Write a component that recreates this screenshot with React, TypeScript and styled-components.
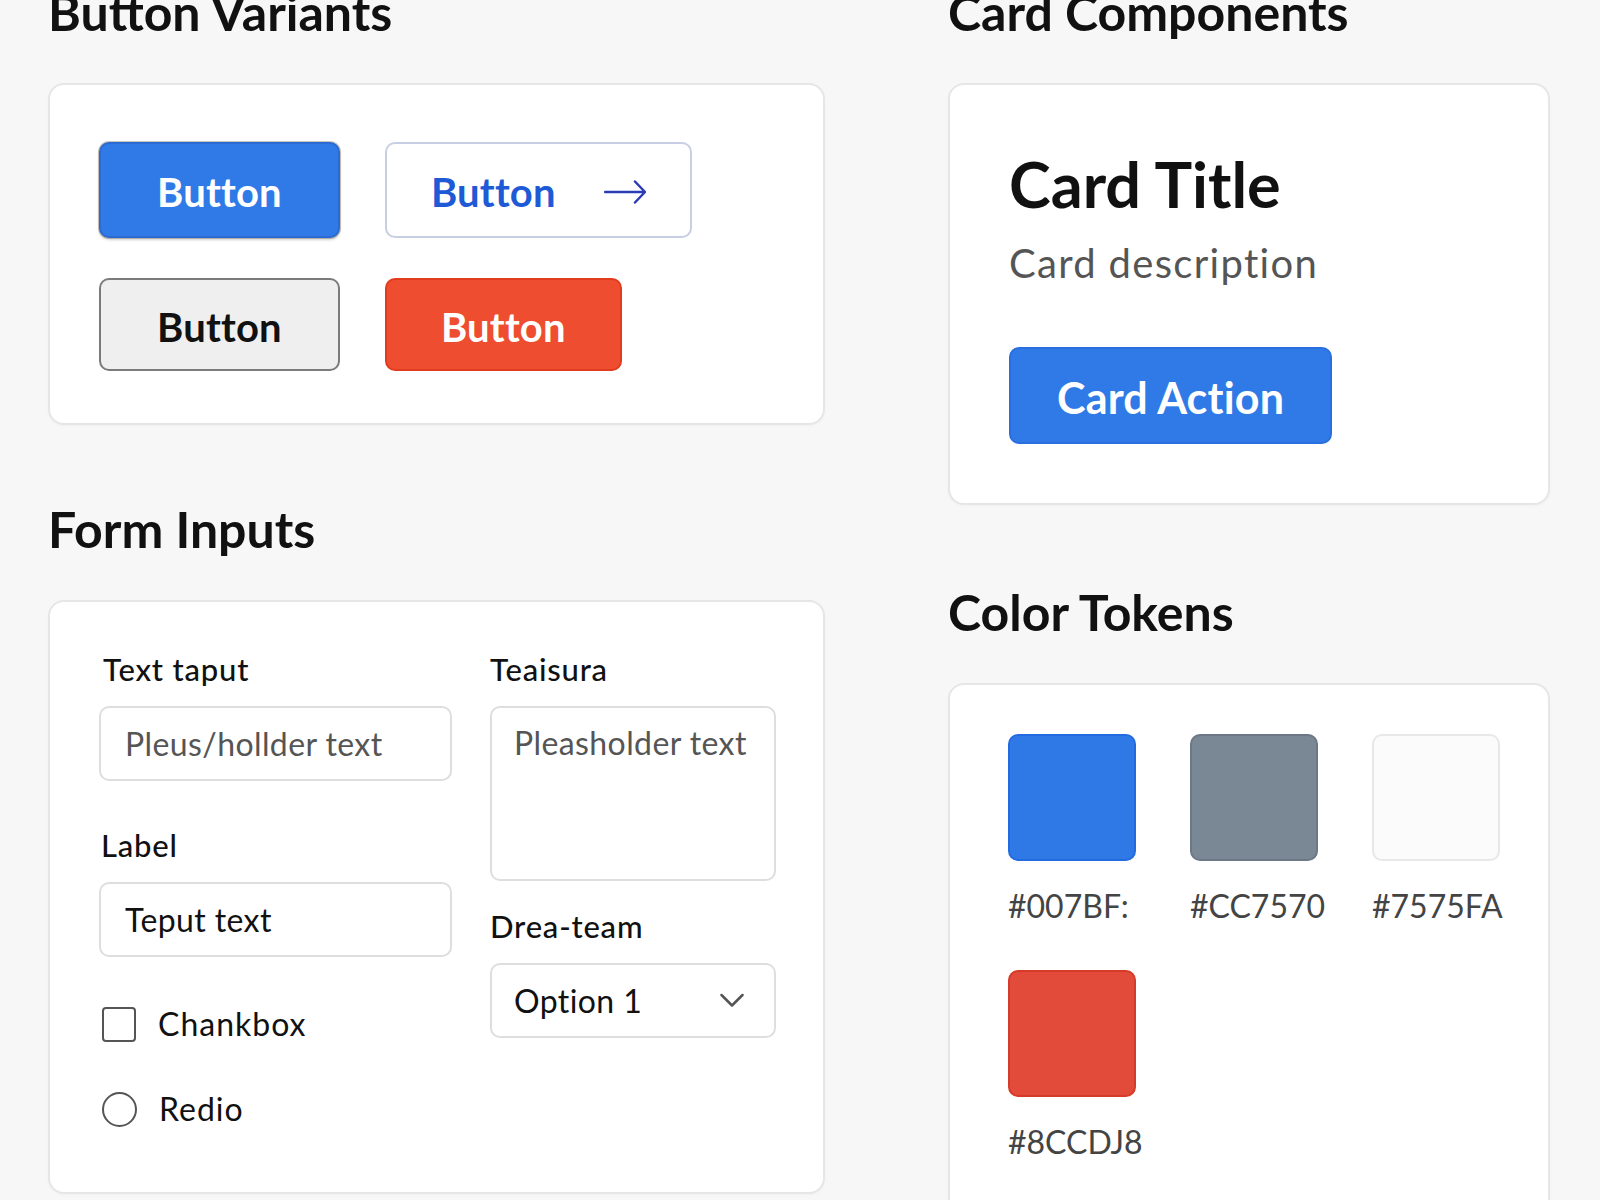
import React from "react";
import styled, { createGlobalStyle, css } from "styled-components";

const GlobalStyle = createGlobalStyle`
  html, body {
    margin: 0;
    padding: 0;
    overflow: hidden;
    background: #f7f7f7;
  }
  body {
    font-family: Lato, "Noto Sans", sans-serif;
    color: #111;
  }
  * { box-sizing: border-box; }
`;

const Page = styled.div`
  display: flex;
  align-items: flex-start;
  gap: 123px;
  padding-left: 48px;
  margin-top: -18px;
  height: 1218px;
  overflow: hidden;
`;

const Column = styled.div<{ $width: number; $gap: number }>`
  display: flex;
  flex-direction: column;
  flex-shrink: 0;
  width: ${(p) => p.$width}px;
  gap: ${(p) => p.$gap}px;
`;

const Section = styled.section`
  display: flex;
  flex-direction: column;
`;

const Heading = styled.h2`
  margin: 0 0 41px;
  font-size: 50px;
  font-weight: 700;
  line-height: 1.2;
  color: #111;
`;

const Card = styled.div<{ $pad: string }>`
  display: flex;
  flex-direction: column;
  align-items: stretch;
  background: #fff;
  border: 2px solid #e6e6e6;
  border-radius: 16px;
  padding: ${(p) => p.$pad};
  box-shadow: 0 1px 3px rgba(0, 0, 0, 0.03);
`;

/* ---------- Buttons ---------- */

type Variant = "primary" | "outline" | "secondary" | "danger";

const variantStyles: Record<Variant, ReturnType<typeof css>> = {
  primary: css`
    height: 96px;
    background: #2f7ae6;
    color: #fff;
    border: 2px solid #2a6ad2;
    box-shadow: 0 0 0 1px rgba(110, 95, 70, 0.35), 0 2px 3px rgba(0, 0, 0, 0.18);
  `,
  outline: css`
    height: 96px;
    gap: 48px;
    padding: 4px 44px 0;
    background: #fff;
    color: #1f5ad6;
    border: 2px solid #c8cee3;
  `,
  secondary: css`
    height: 93px;
    background: #efefef;
    color: #111;
    border: 2px solid #7b7b7b;
  `,
  danger: css`
    height: 93px;
    padding: 4px 54px 0;
    background: #ee4d2f;
    color: #fff;
    border: 2px solid #e23c1f;
  `,
};

const Btn = styled.button<{ $variant: Variant }>`
  display: inline-flex;
  align-items: center;
  justify-content: center;
  padding: 4px 56px 0;
  border-radius: 10px;
  font-family: inherit;
  font-size: 40px;
  font-weight: 700;
  letter-spacing: 0.2px;
  line-height: 1;
  cursor: pointer;
  ${(p) => variantStyles[p.$variant]}
`;

const ButtonGrid = styled.div`
  display: grid;
  grid-template-columns: max-content max-content;
  column-gap: 45px;
  row-gap: 40px;
  justify-items: start;
  padding-top: 2px;
`;

const ArrowIcon = () => (
  <svg width="42" height="24" viewBox="0 0 42 24" fill="none">
    <path
      d="M1 12H41M31 1.5L41 12L31 22.5"
      stroke="#2a3db4"
      strokeWidth="2.5"
      strokeLinecap="round"
      strokeLinejoin="round"
    />
  </svg>
);

/* ---------- Card component ---------- */

const CardTitle = styled.h3`
  margin: 0;
  font-size: 63px;
  font-weight: 700;
  line-height: 1.2;
  color: #111;
`;

const CardDesc = styled.p`
  margin: 17px 0 0;
  font-size: 40px;
  font-weight: 400;
  letter-spacing: 1.3px;
  line-height: 1.2;
  color: #555;
`;

const CardAction = styled.button`
  align-self: flex-start;
  margin-top: 60px;
  height: 97px;
  padding: 4px 46px 0;
  border-radius: 10px;
  border: 2px solid #2a6fe0;
  background: #2f7ae6;
  color: #fff;
  font-family: inherit;
  font-size: 43px;
  font-weight: 700;
  letter-spacing: 0.2px;
  line-height: 1;
  cursor: pointer;
`;

/* ---------- Form ---------- */

const FormGrid = styled.div`
  display: grid;
  grid-template-columns: 353px 286px;
  column-gap: 38px;
  align-items: start;
`;

const FieldColumn = styled.div`
  display: flex;
  flex-direction: column;
`;

const FieldLabel = styled.label<{ $top?: number; $inset?: number }>`
  display: block;
  margin: ${(p) => p.$top ?? 0}px 0 18px;
  padding-left: ${(p) => p.$inset ?? 0}px;
  font-size: 31px;
  font-weight: 500;
  letter-spacing: 0.8px;
  line-height: 37px;
  color: #111;
`;

const fieldBox = css`
  width: 100%;
  border: 2px solid #dedede;
  border-radius: 10px;
  background: #fff;
  font-family: inherit;
  font-size: 32px;
  letter-spacing: 0.4px;
  color: #111;
  outline: none;
  &::placeholder {
    color: #555;
    opacity: 1;
  }
`;

const TextInput = styled.input`
  ${fieldBox}
  height: 75px;
  padding: 0 24px;
`;

const TextArea = styled.textarea`
  ${fieldBox}
  height: 175px;
  padding: 16px 22px;
  line-height: 1.2;
  resize: none;
`;

const SelectBox = styled.div`
  ${fieldBox}
  display: flex;
  align-items: center;
  justify-content: space-between;
  height: 75px;
  padding: 0 30px 0 22px;
`;

const ChoiceRow = styled.label<{ $top: number }>`
  display: flex;
  align-items: center;
  gap: 22px;
  margin-top: ${(p) => p.$top}px;
  padding-left: 3px;
  font-size: 32px;
  letter-spacing: 1px;
  line-height: 38px;
  color: #111;
`;

const CheckBox = styled.span`
  display: inline-block;
  width: 34px;
  height: 35px;
  border: 2.5px solid #555;
  border-radius: 4px;
`;

const RadioCircle = styled.span`
  display: inline-block;
  width: 35px;
  height: 35px;
  border: 2.5px solid #555;
  border-radius: 50%;
`;

const ChevronIcon = () => (
  <svg width="24" height="15" viewBox="0 0 24 15" fill="none">
    <path
      d="M1.5 2L12 12.5L22.5 2"
      stroke="#555"
      strokeWidth="2.5"
      strokeLinecap="round"
      strokeLinejoin="round"
    />
  </svg>
);

/* ---------- Color tokens ---------- */

const SwatchGrid = styled.div`
  display: grid;
  grid-template-columns: repeat(3, 128px);
  column-gap: 54px;
  row-gap: 45px;
`;

const Token = styled.div`
  display: flex;
  flex-direction: column;
`;

const Swatch = styled.div<{ $color: string; $border: string }>`
  width: 128px;
  height: 127px;
  border-radius: 10px;
  background: ${(p) => p.$color};
  border: 2px solid ${(p) => p.$border};
`;

const TokenLabel = styled.span`
  margin-top: 26px;
  font-size: 32px;
  line-height: 38px;
  color: #444;
  white-space: nowrap;
`;

const tokens = [
  { label: "#007BF:", color: "#2f79e6", border: "#236be0" },
  { label: "#CC7570", color: "#7a8794", border: "#6c7886" },
  { label: "#7575FA", color: "#fbfbfb", border: "#e8e8e8" },
  { label: "#8CCDJ8", color: "#e24a3a", border: "#d63b2a" },
];

export default function App() {
  return (
    <>
      <GlobalStyle />
      <Page>
        <Column $width={777} $gap={74}>
          <Section>
            <Heading>Button Variants</Heading>
            <Card $pad="55px 49px 52px">
              <ButtonGrid>
                <Btn $variant="primary">Button</Btn>
                <Btn $variant="outline">
                  Button
                  <ArrowIcon />
                </Btn>
                <Btn $variant="secondary">Button</Btn>
                <Btn $variant="danger">Button</Btn>
              </ButtonGrid>
            </Card>
          </Section>

          <Section>
            <Heading>Form Inputs</Heading>
            <Card $pad="49px 47px 64px 49px">
              <FormGrid>
                <FieldColumn>
                  <FieldLabel $inset={4}>Text taput</FieldLabel>
                  <TextInput placeholder="Pleus/hollder text" />
                  <FieldLabel $top={46} $inset={2}>
                    Label
                  </FieldLabel>
                  <TextInput defaultValue="Teput text" />
                  <ChoiceRow $top={48}>
                    <CheckBox />
                    Chankbox
                  </ChoiceRow>
                  <ChoiceRow $top={47}>
                    <RadioCircle />
                    Redio
                  </ChoiceRow>
                </FieldColumn>
                <FieldColumn>
                  <FieldLabel>Teaisura</FieldLabel>
                  <TextArea placeholder="Pleasholder text" />
                  <FieldLabel $top={27}>Drea-team</FieldLabel>
                  <SelectBox>
                    <span>Option 1</span>
                    <ChevronIcon />
                  </SelectBox>
                </FieldColumn>
              </FormGrid>
            </Card>
          </Section>
        </Column>

        <Column $width={602} $gap={77}>
          <Section>
            <Heading>Card Components</Heading>
            <Card $pad="61px 59px 59px">
              <CardTitle>Card Title</CardTitle>
              <CardDesc>Card description</CardDesc>
              <CardAction>Card Action</CardAction>
            </Card>
          </Section>

          <Section>
            <Heading>Color Tokens</Heading>
            <Card $pad="49px 58px 60px">
              <SwatchGrid>
                {tokens.map((t) => (
                  <Token key={t.label}>
                    <Swatch $color={t.color} $border={t.border} />
                    <TokenLabel>{t.label}</TokenLabel>
                  </Token>
                ))}
              </SwatchGrid>
            </Card>
          </Section>
        </Column>
      </Page>
    </>
  );
}
